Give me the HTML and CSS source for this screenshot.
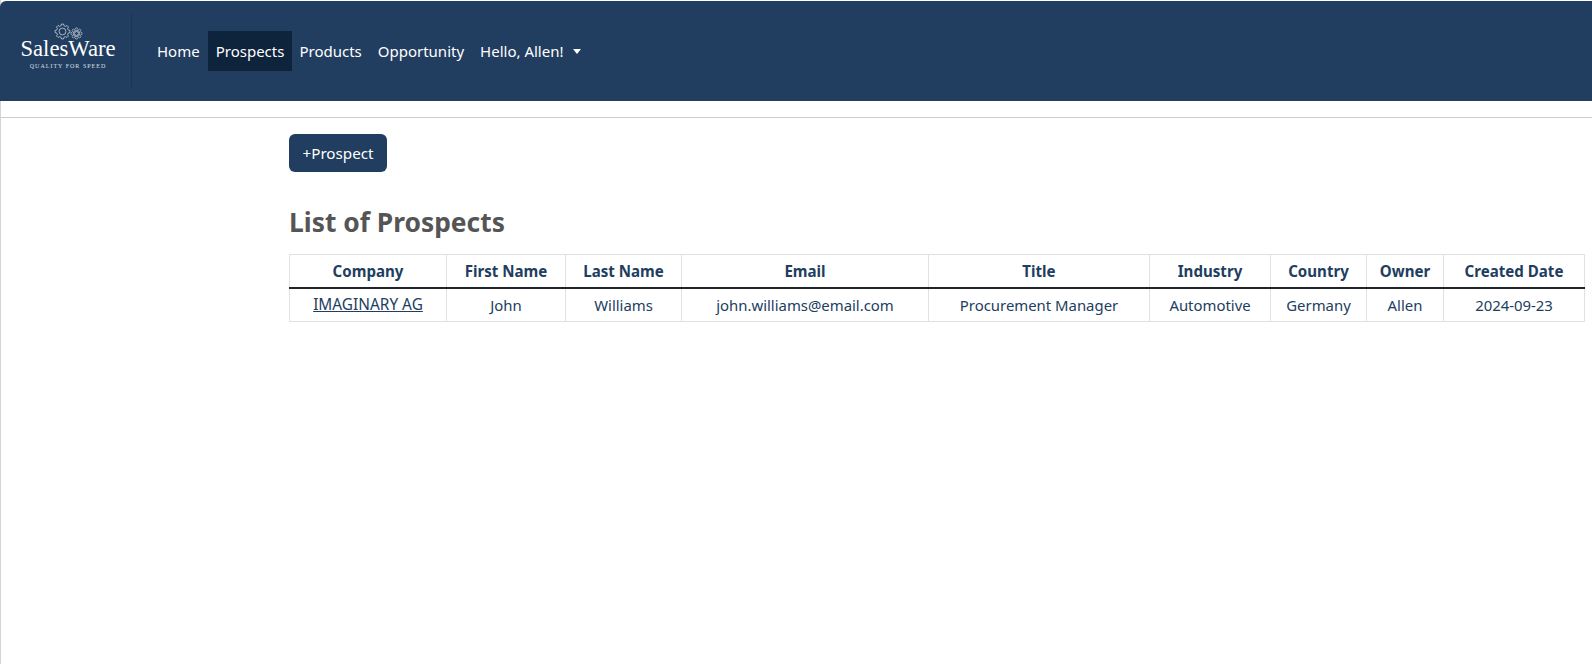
FILE: index.html
```html
<!DOCTYPE html>
<html lang="en">
<head>
<meta charset="utf-8">
<title>List of Prospects</title>
<link rel="stylesheet" href="styles.css">
</head>
<body>
<div class="page">
  <header class="navbar">
    <a class="brand" href="#">
      <svg class="gears" width="30" height="20" viewBox="0 0 30 20" fill="none" stroke="#dfe5ec" stroke-width=".7">
        <defs>
          <path id="gear" d="M5.82-1.45 7.43-1.04V1.04L5.82 1.45 5.14 3.09 5.99 4.51 4.51 5.99 3.09 5.14 1.45 5.82 1.04 7.43H-1.04L-1.45 5.82-3.09 5.14-4.51 5.99-5.99 4.51-5.14 3.09-5.82 1.45-7.43 1.04V-1.04L-5.82-1.45-5.14-3.09-5.99-4.51-4.51-5.99-3.09-5.14-1.45-5.82-1.04-7.43H1.04L1.45-5.82 3.09-5.14 4.51-5.99 5.99-4.51 5.14-3.09Z"/>
        </defs>
        <use href="#gear" transform="translate(9.5 9.5)"/>
        <circle cx="9.5" cy="9.5" r="3.4"/>
        <use href="#gear" transform="translate(23.5 11.5) scale(.75)"/>
        <circle cx="23.5" cy="11.5" r="3.2"/>
        <circle cx="23.5" cy="11.5" r="2"/>
      </svg>
      <span class="brand-name">SalesWare</span>
      <span class="brand-tag">QUALITY FOR SPEED</span>
    </a>
    <nav class="nav">
      <a class="nav-link" href="#">Home</a>
      <a class="nav-link active" href="#">Prospects</a>
      <a class="nav-link" href="#">Products</a>
      <a class="nav-link" href="#">Opportunity</a>
      <a class="nav-link" href="#">Hello, Allen!<span class="caret"></span></a>
    </nav>
  </header>
  <hr class="rule">
  <main class="content">
    <a class="btn" href="#">+Prospect</a>
    <h2 class="title">List of Prospects</h2>
    <table class="grid">
      <colgroup>
        <col class="c1"><col class="c2"><col class="c3"><col class="c4"><col class="c5">
        <col class="c6"><col class="c7"><col class="c8"><col class="c9">
      </colgroup>
      <thead>
        <tr>
          <th>Company</th><th>First Name</th><th>Last Name</th><th>Email</th><th>Title</th>
          <th>Industry</th><th>Country</th><th>Owner</th><th>Created Date</th>
        </tr>
      </thead>
      <tbody>
        <tr>
          <td><a class="link" href="#">IMAGINARY AG</a></td><td>John</td><td>Williams</td>
          <td>john.williams@email.com</td><td>Procurement Manager</td><td>Automotive</td>
          <td>Germany</td><td>Allen</td><td>2024-09-23</td>
        </tr>
      </tbody>
    </table>
  </main>
</div>
</body>
</html>
```
FILE: styles.css
```css
* { box-sizing: border-box; }
html, body { margin: 0; height: 100%; background: #fff; }
body { font-family: "Noto Sans", "Open Sans", sans-serif; font-size: 15px; color: #213d60; overflow: hidden; }
.page { height: 664px; padding-top: 1px; border-left: 1px solid #d4d4d4; }
.navbar { display: flex; align-items: center; height: 100px; margin-left: -1px; background: #213d60; border-top-left-radius: 6px; padding-left: 20px; }
.brand { display: flex; flex-direction: column; align-items: center; width: 96px; height: 74px; margin-top: -2px; color: #fff; text-decoration: none; line-height: 1; padding-top: 9px; }
.gears { display: block; flex: none; }
.brand-name { font-family: "Liberation Serif", serif; font-size: 22.7px; margin-top: -4px; white-space: nowrap; }
.brand-tag { font-family: "Liberation Serif", serif; font-size: 6px; letter-spacing: 1px; margin-top: 2px; white-space: nowrap; color: #d9e0e8; }
.nav { display: flex; align-items: center; height: 74px; margin-left: 15px; padding-left: 17px; border-left: 1px solid #1c3553; }
.nav-link { display: block; height: 40px; padding: 0 8px; line-height: 40px; color: #fff; text-decoration: none; font-size: 15px; white-space: nowrap; }
.nav-link.active { background: #0e233c; margin-right: -1px; }
.caret { display: inline-block; margin-left: 10px; vertical-align: 3px; border-top: 5px solid #fff; border-left: 4.5px solid transparent; border-right: 4.5px solid transparent; }
.rule { margin: 16px 0 0; border: 0; border-top: 1px solid #ccc; }
.content { padding: 16px 7px 0 288px; }
.btn { display: inline-block; height: 38px; padding: 0 13.5px; line-height: 38px; background: #213d60; color: #fff; border-radius: 6px; text-decoration: none; font-size: 15.2px; }
.title { margin: 28px 0 0; height: 43px; font-size: 26.4px; line-height: 44px; font-weight: 700; color: #555; }
.grid { width: 1295px; margin-top: 11px; border-collapse: collapse; table-layout: fixed; }
.c1 { width: 157px; } .c2 { width: 119px; } .c3 { width: 116px; } .c4 { width: 247px; } .c5 { width: 221px; }
.c6 { width: 121px; } .c7 { width: 96px; } .c8 { width: 77px; } .c9 { width: 141px; }
th, td { border: 1px solid #dee2e6; text-align: center; padding: 0; white-space: nowrap; }
th { height: 33px; font-size: 15.1px; font-weight: 700; border-bottom: 2px solid #212529; }
td { height: 34px; font-size: 14.9px; }
.link { color: #213d60; font-size: 15.4px; }
```
